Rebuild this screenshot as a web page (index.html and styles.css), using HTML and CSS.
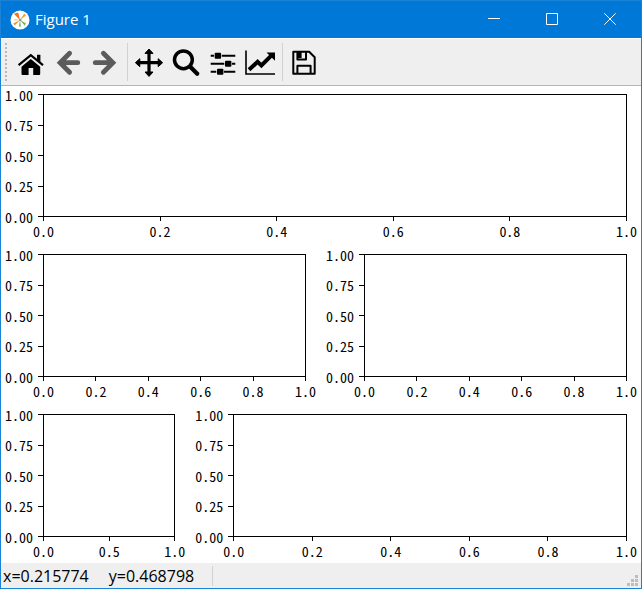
FILE: index.html
```
<!DOCTYPE html>
<html lang="en">
<head>
<meta charset="utf-8">
<title>Figure 1</title>
<link rel="stylesheet" href="styles.css">
</head>
<body>
<div class="window">
  <header class="titlebar">
    <svg class="app-icon" viewBox="0 0 20 20" aria-hidden="true">
      <circle cx="10" cy="10" r="9.5" fill="#fff"/>
      <path d="M10 10 3.800 3.800 8.200 2.400z" fill="#f4701c"/>
      <path d="M10 10 14.200 3.400 16 5.400z" fill="#f0a030"/>
      <path d="M10 10 4.600 15.600 3.400 13.600z" fill="#f08a30"/>
      <path d="M10 10 16 13.500 14.600 15.400z" fill="#7fb03c"/>
      <path d="M10 10 10.800 16.400 9 16.400z" fill="#58b040"/>
      <path d="M10 10 4.500 10.600 4.500 9z" fill="#d8d050"/>
      <circle cx="10.300" cy="10" r="1.300" fill="#8a9a8a"/>
    </svg>
    <h1 class="title">Figure 1</h1>
    <div class="window-buttons">
      <button type="button" aria-label="Minimize"><svg viewBox="0 0 12 12"><path d="M0 5.5H12"/></svg></button>
      <button type="button" aria-label="Maximize"><svg viewBox="0 0 12 12"><path d="M.5.5H11.500V11.500H.5z"/></svg></button>
      <button type="button" aria-label="Close"><svg viewBox="0 0 12 12"><path d="M.3.3 11.700 11.700M11.700.3.3 11.700"/></svg></button>
    </div>
  </header>

  <nav class="toolbar" aria-label="Figure tools">
    <span class="handle"></span>
    <button type="button" aria-label="Home"><svg viewBox="0 0 36 36">
      <path d="M8.500 22.800 17.800 15 27.200 22.800V30a1 1 0 0 1-1 1H20.200V24H15.600V31H9.500a1 1 0 0 1-1-1z"/>
      <path d="M24 10.800H27.400V19L24 16z"/>
      <path class="line" stroke-width="2.200" d="M5.600 21.200 17.800 11.200 30 21.200"/>
    </svg></button>
    <button type="button" class="muted" aria-label="Back"><svg viewBox="0 0 36 36">
      <path class="line round" stroke-width="4.800" d="M19.600 9.200 10.100 18.700 19.600 28.200M11 18.700H27.800"/>
    </svg></button>
    <button type="button" class="muted" aria-label="Forward"><svg viewBox="0 0 36 36">
      <path class="line round" stroke-width="4.800" d="M16.400 9.200 25.900 18.700 16.400 28.200M25 18.700H8.200"/>
    </svg></button>
    <span class="separator"></span>
    <button type="button" aria-label="Pan"><svg viewBox="0 0 36 36">
      <path class="line" stroke-width="3.200" d="M7 18.700H29M18 8V30"/>
      <path class="joined" d="M18 5 22 9.400H14zM18 32.400 22 28H14zM4.400 18.700 8.800 14.700V22.700zM31.600 18.700 27.200 14.700V22.700z"/>
    </svg></button>
    <button type="button" aria-label="Zoom"><svg viewBox="0 0 36 36">
      <circle class="line" cx="15.400" cy="15.800" r="8.900" stroke-width="3.500"/>
      <path class="line round" stroke-width="4.200" d="M22.500 23 29.200 29.700"/>
    </svg></button>
    <button type="button" aria-label="Configure subplots"><svg viewBox="0 0 36 36">
      <path class="line" stroke-width="2" d="M5.700 11.700H9M16.800 11.700H30.300M5.700 19.700H19.300M27 19.700H30.300M5.700 27.700H11.300M19 27.700H30.300"/>
      <rect x="9.700" y="8.700" width="6.400" height="6" rx="1"/>
      <rect x="20" y="16.700" width="6.400" height="6" rx="1"/>
      <rect x="12" y="24.700" width="6.400" height="6" rx="1"/>
    </svg></button>
    <button type="button" aria-label="Edit axes"><svg viewBox="0 0 36 36">
      <path class="line" stroke-width="1.600" d="M4 6.500V30H33"/>
      <path class="line" stroke-width="4" d="M7 25.800 15.600 17.800 19.400 21.400 29 11.800"/>
      <path d="M24.500 8.600H33V16.800z"/>
    </svg></button>
    <span class="separator"></span>
    <button type="button" aria-label="Save"><svg viewBox="0 0 36 36">
      <path class="line" stroke-width="2" stroke-linejoin="round" d="M7.300 7.700H23.200L28.700 13.200V29.700H7.300zM11.400 29.700V21.700H24.600V29.700M11.400 8V15.500H20V8"/>
      <path d="M11 8H15.600V14H11z"/>
    </svg></button>
  </nav>

  <main class="canvas">
    <div class="row">
      <section class="plot" aria-label="Axes 1">
        <ol class="y-axis"><li>1.00</li><li>0.75</li><li>0.50</li><li>0.25</li><li>0.00</li></ol>
        <div class="frame"></div>
        <ol class="x-axis"><li>0.0</li><li>0.2</li><li>0.4</li><li>0.6</li><li>0.8</li><li>1.0</li></ol>
      </section>
    </div>
    <div class="row halves">
      <section class="plot" aria-label="Axes 2">
        <ol class="y-axis"><li>1.00</li><li>0.75</li><li>0.50</li><li>0.25</li><li>0.00</li></ol>
        <div class="frame"></div>
        <ol class="x-axis"><li>0.0</li><li>0.2</li><li>0.4</li><li>0.6</li><li>0.8</li><li>1.0</li></ol>
      </section>
      <section class="plot" aria-label="Axes 3">
        <ol class="y-axis"><li>1.00</li><li>0.75</li><li>0.50</li><li>0.25</li><li>0.00</li></ol>
        <div class="frame"></div>
        <ol class="x-axis"><li>0.0</li><li>0.2</li><li>0.4</li><li>0.6</li><li>0.8</li><li>1.0</li></ol>
      </section>
    </div>
    <div class="row narrow-wide">
      <section class="plot" aria-label="Axes 4">
        <ol class="y-axis"><li>1.00</li><li>0.75</li><li>0.50</li><li>0.25</li><li>0.00</li></ol>
        <div class="frame"></div>
        <ol class="x-axis"><li>0.0</li><li>0.5</li><li>1.0</li></ol>
      </section>
      <section class="plot" aria-label="Axes 5">
        <ol class="y-axis"><li>1.00</li><li>0.75</li><li>0.50</li><li>0.25</li><li>0.00</li></ol>
        <div class="frame"></div>
        <ol class="x-axis"><li>0.0</li><li>0.2</li><li>0.4</li><li>0.6</li><li>0.8</li><li>1.0</li></ol>
      </section>
    </div>
  </main>

  <footer class="status">
    <div class="coords"><span>x=0.215774</span><span>y=0.468798</span></div>
    <svg class="grip" viewBox="0 0 11 11" aria-hidden="true">
      <path d="M8 0h3v3h-3zM8 4h3v3h-3zM4 4h3v3h-3zM8 8h3v3h-3zM4 8h3v3h-3zM0 8h3v3h-3z"/>
    </svg>
  </footer>
</div>
</body>
</html>
```
FILE: styles.css
```
* {
  box-sizing: border-box;
}

body {
  margin: 0;
  font-family: "Open Sans", "Noto Sans", sans-serif;
  color: #000;
}

button {
  padding: 0;
  border: 0;
  background: none;
  color: inherit;
}

svg {
  display: block;
}

ol {
  margin: 0;
  padding: 0;
  list-style: none;
}

.window {
  display: flex;
  flex-direction: column;
  min-height: 100vh;
  border: 1px solid #1883d7;
  background: #fff;
}

.titlebar {
  display: flex;
  align-items: center;
  height: 37px;
  padding: 0 2px 0 9px;
  background: #0078d7;
  color: #fff;
}

.app-icon {
  width: 20px;
  height: 20px;
}

.title {
  flex: 1;
  margin: 0 0 2px 5px;
  font-size: 15px;
  font-weight: 400;
}

.window-buttons {
  display: flex;
  align-self: stretch;
}

.window-buttons button {
  display: grid;
  place-items: center;
  width: 58px;
  padding-bottom: 1px;
}

.window-buttons svg {
  width: 12px;
  height: 12px;
  fill: none;
  stroke: #fff;
}

.toolbar {
  display: flex;
  align-items: center;
  gap: 1px;
  height: 48px;
  padding-left: 4px;
  border-top: 1px solid #fff;
  border-bottom: 1px solid #b4b4b4;
  background: #efefef;
}

.handle {
  width: 2px;
  height: 39px;
  margin-right: 5px;
  background: repeating-linear-gradient(#b8b8b8 0 2px, transparent 2px 4px);
}

.toolbar svg {
  width: 36px;
  height: 36px;
  fill: currentColor;
}

.toolbar .line {
  fill: none;
  stroke: currentColor;
}

.toolbar .round {
  stroke-linecap: round;
}

.toolbar .joined {
  stroke: currentColor;
  stroke-linejoin: round;
}

.muted {
  color: #5b5b5b;
}

.separator {
  width: 1px;
  height: 38px;
  margin: 0 2px 0 3px;
  background: #d2d2d2;
}

.canvas {
  flex: 1;
  display: flex;
  flex-direction: column;
  gap: 16px;
  padding: 8px 14px 5px 0;
}

.row {
  flex: 1;
  display: grid;
  column-gap: 16px;
}

.halves {
  grid-template-columns: 1fr 1fr;
}

.narrow-wide {
  grid-template-columns: 2fr 5fr;
}

.plot {
  display: grid;
  grid-template: 1fr 21px / 42px 1fr;
  font-family: "Noto Sans CJK SC", sans-serif;
  font-size: 14px;
  line-height: 16px;
  font-feature-settings: "hwid";
}

.frame {
  min-height: 80px;
  border: 1px solid #000;
}

.y-axis {
  display: flex;
  flex-direction: column;
  justify-content: space-between;
}

.y-axis li {
  display: flex;
  align-items: center;
  justify-content: flex-end;
  gap: 5px;
  height: 1px;
}

.y-axis li::after {
  content: "";
  width: 5px;
  height: 1px;
  background: #000;
}

.x-axis {
  grid-column: 2;
  display: flex;
  justify-content: space-between;
}

.x-axis li {
  display: flex;
  flex-direction: column;
  align-items: center;
  width: 1px;
}

.x-axis li::before {
  content: "";
  flex: none;
  width: 1px;
  height: 4px;
  margin-bottom: 2px;
  background: #000;
}

.status {
  display: flex;
  justify-content: space-between;
  align-items: flex-end;
  height: 25px;
  padding: 2px 3px 2px 2px;
  background: #efefef;
}

.coords {
  display: flex;
  align-items: flex-end;
  gap: 20px;
  width: 210px;
  border-right: 1px solid #d2d2d2;
  font-size: 16px;
  line-height: 20px;
}

.grip {
  width: 11px;
  height: 11px;
  fill: #bdbdbd;
}
```
